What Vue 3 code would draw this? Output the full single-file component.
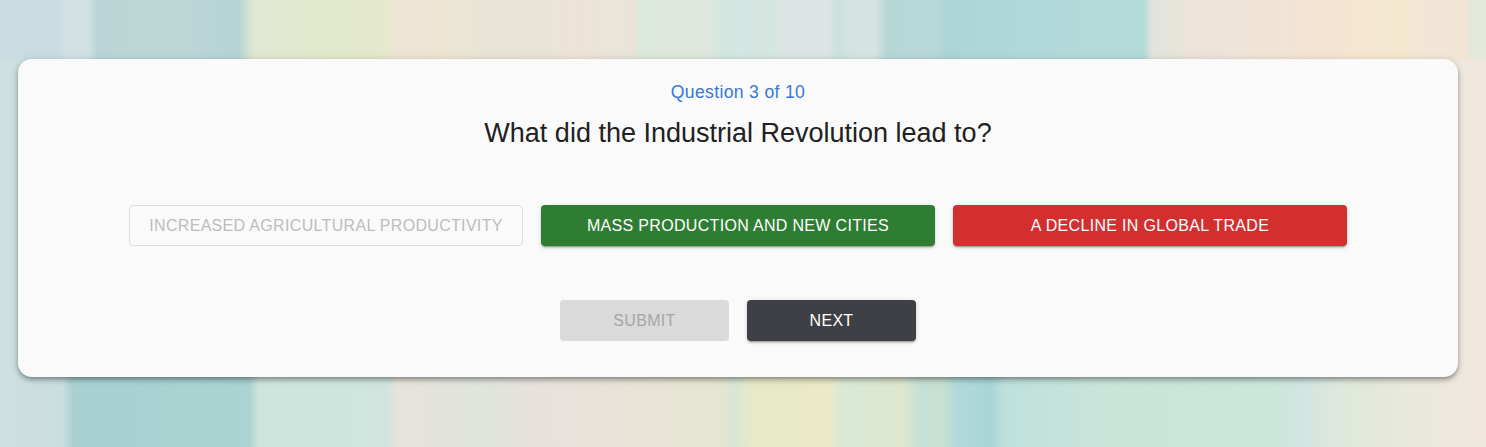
<script setup>
const answers = [
  { label: 'Increased agricultural productivity', kind: 'muted' },
  { label: 'Mass production and new cities', kind: 'right' },
  { label: 'A decline in global trade', kind: 'wrong' },
]
</script>

<template>
  <main class="page">
    <section class="card">
      <p class="count">Question 3 of 10</p>
      <h1 class="title">What did the Industrial Revolution lead to?</h1>
      <div class="answers">
        <button v-for="a in answers" :key="a.label" class="btn" :class="a.kind" type="button">{{ a.label }}</button>
      </div>
      <div class="actions">
        <button class="btn action off" type="button" disabled>Submit</button>
        <button class="btn action next" type="button">Next</button>
      </div>
    </section>
  </main>
</template>

<style>
html, body { margin: 0; }
</style>

<style scoped>
.page {
  box-sizing: border-box;
  width: 1486px;
  height: 447px;
  padding: 59px 28px 70px 18px;
  overflow: hidden;
  background:
    linear-gradient(90deg, #c9dde0 0, #c9dde0 58px, #d1e1e3 66px, #d1e1e3 88px, #b9d5d5 98px, #bcd7d5 170px, #b6d3d5 238px, #dfe8d2 254px, #e2e9cb 330px, #e5e9cc 383px, #ece4d5 394px, #ece5d2 440px, #e8e5d6 490px, #e9e5d6 550px, #ece4d6 570px, #e8e5d8 634px, #d8eadf 642px, #dfe8db 660px, #dde7dd 710px, #d3e7e2 724px, #d6e6e2 772px, #dce5e3 785px, #dce5e3 828px, #c9e1de 838px, #d4e4e2 852px, #d4e4e2 876px, #b7d7d6 886px, #b9d9d8 934px, #aed5d5 946px, #b2d9d9 1040px, #b4dad9 1143px, #e0e5dc 1152px, #ece4da 1190px, #f1e4d6 1280px, #f3e4d3 1310px, #f5e8cf 1400px, #f1e6d8 1430px, #f3e5d3 1465px, #e2e8da 1471px, #e2e8da 1486px) top / 100% 59px no-repeat,
    linear-gradient(90deg, #cfe0e0 0, #c8dedf 63px, #a9d0d0 73px, #aad3d2 249px, #cde5dc 259px, #cfe5dd 388px, #e6e3dc 397px, #dfe4dc 480px, #e6e1dc 530px, #e8e3da 600px, #e6e5d0 722px, #d8e6d5 733px, #e7e9c8 752px, #eae9c8 830px, #dae8d4 842px, #dde7cf 903px, #c5e0d6 920px, #c8e0d0 943px, #b4dadb 954px, #a8d5d5 990px, #bfe0dc 1006px, #c9e5da 1100px, #cbe6db 1280px, #d3e5e2 1305px, #dfe8dc 1340px, #e8e8dc 1400px, #efe8df 1460px, #efe7dd 1486px) bottom / 100% 388px no-repeat;
}

.card {
  box-sizing: border-box;
  width: 1440px;
  height: 318px;
  padding: 22px 111px 0;
  border-radius: 14px;
  background: #fafafa;
  box-shadow: 0 2px 4px -1px rgba(0, 0, 0, .3), 0 4px 5px 0 rgba(0, 0, 0, .14), 0 1px 10px 0 rgba(0, 0, 0, .12);
  text-align: center;
  font-family: "Liberation Sans", Arial, sans-serif;
}

.count {
  margin: 0;
  color: #3578d6;
  font-size: 17.6px;
  line-height: 22px;
  letter-spacing: .33px;
}

.title {
  margin: 14px 0 0;
  color: #212121;
  font-size: 27px;
  font-weight: 400;
  line-height: 33px;
}

.answers {
  display: flex;
  justify-content: center;
  gap: 18px;
  margin-top: 55px;
}

.actions {
  display: flex;
  justify-content: center;
  gap: 18px;
  margin-top: 54px;
}

.btn {
  box-sizing: border-box;
  width: 394px;
  height: 41px;
  padding: 0;
  border: 0;
  border-radius: 4px;
  color: #fff;
  font: 400 16px/1 "Liberation Sans", Arial, sans-serif;
  letter-spacing: .32px;
  text-transform: uppercase;
  box-shadow: 0 3px 1px -2px rgba(0, 0, 0, .2), 0 2px 2px 0 rgba(0, 0, 0, .14), 0 1px 5px 0 rgba(0, 0, 0, .12);
}

.muted {
  border: 1px solid #dcdcdc;
  background: transparent;
  color: #bdbdbd;
  box-shadow: none;
}

.right { background: #2e7d32; }
.wrong { background: #d32f2f; }

.action { width: 169px; }
.off { background: #dadada; color: #a6a6a6; box-shadow: none; }
.next { background: #3f3f46; }
</style>
